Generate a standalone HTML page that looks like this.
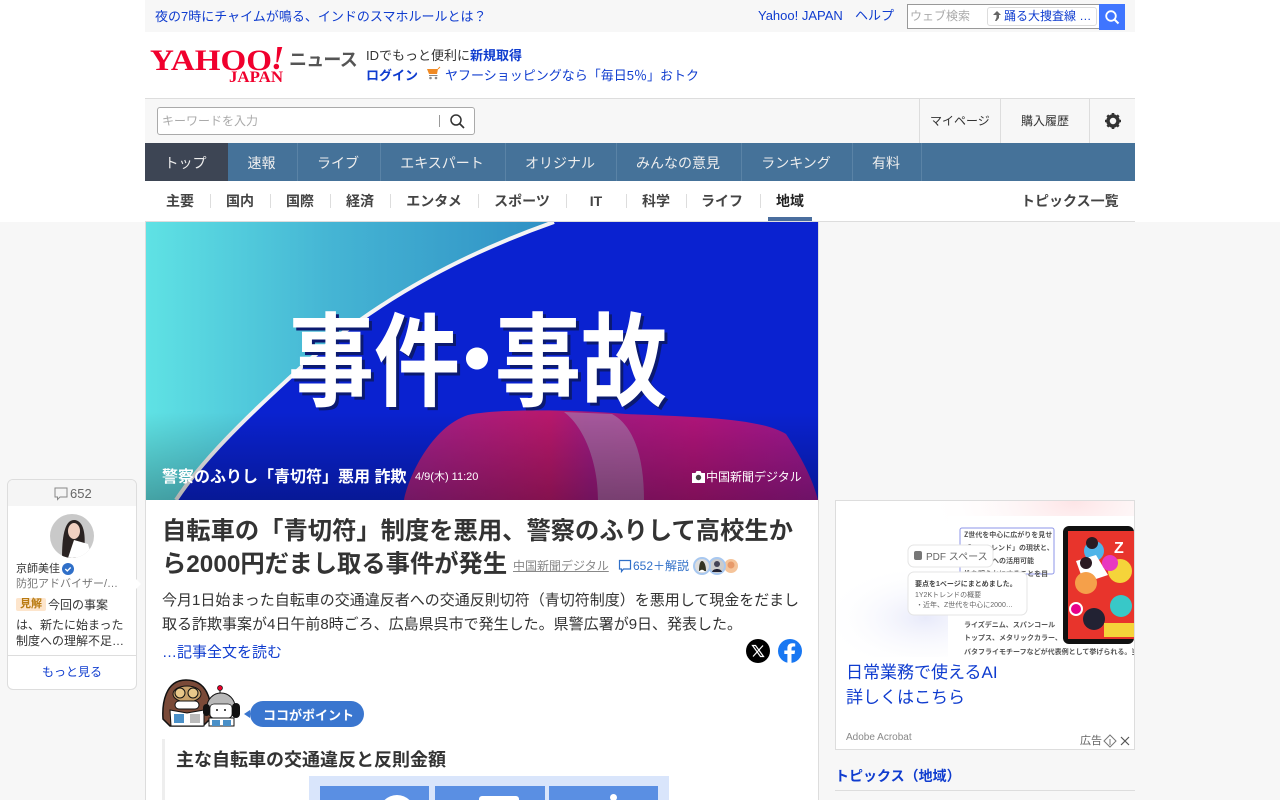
<!DOCTYPE html>
<html lang="ja"><head><meta charset="utf-8"><title>Yahoo!ニュース</title>
<style>
html,body{margin:0;padding:0}
body{width:1280px;height:800px;overflow:hidden;position:relative;background:#f7f7f7;font-family:"Liberation Sans","Noto Sans CJK JP",sans-serif;color:#333}
.a{position:absolute}
.t{position:absolute;white-space:nowrap;line-height:1}
.l{color:#0f3ccf}
.b{font-weight:bold}
.s{position:absolute;background:#ddd;width:1px}
.n{position:absolute;top:143px;height:38px;line-height:40px;font-size:14px;color:#eee;text-align:center;border-right:1px solid #5a83a6;box-sizing:border-box;white-space:nowrap;text-indent:-2px}
.m{position:absolute;top:193px;font-size:14px;font-weight:bold;color:#444;line-height:16px;transform:translateX(-50%);white-space:nowrap}
</style></head><body>
<div class="a" style="left:0;top:0;width:1280px;height:222px;background:#fff"></div>
<div class="a" style="left:145px;top:0;width:990px;height:32px;background:#f7f7f7"></div>
<div class="t l" style="left:155px;top:10px;font-size:13px">夜の7時にチャイムが鳴る、インドのスマホルールとは？</div>
<div class="t l" style="left:758px;top:9px;font-size:13px">Yahoo! JAPAN</div>
<div class="t l" style="left:855px;top:9px;font-size:13px">ヘルプ</div>
<div class="a" style="left:907px;top:4px;width:191px;height:23px;border:1px solid #999;background:#fff"></div>
<div class="t" style="left:910px;top:10px;font-size:12px;color:#aaa">ウェブ検索</div>
<div class="a" style="left:987px;top:7px;width:108px;height:17px;border:1px solid #ddd;border-radius:3px"></div>
<svg class="a" style="left:992px;top:10px" width="10" height="12" viewBox="0 0 10 12"><path d="M5 1l4 4H7v3L4.500 11H3l1.500-3.500V5H1z" fill="#666"/></svg>
<div class="t l" style="left:1004px;top:10px;font-size:12px">踊る大捜査線 …</div>
<div class="a" style="left:1099px;top:4px;width:26px;height:26px;background:#3f75ff"></div>
<svg class="a" style="left:1104px;top:9px" width="16" height="16" viewBox="0 0 16 16"><circle cx="7" cy="7" r="4.800" fill="none" stroke="#fff" stroke-width="1.800"/><path d="M10.500 10.500L14.500 14.500" stroke="#fff" stroke-width="2"/></svg>

<svg class="a" style="left:149px;top:44px" width="140" height="42" viewBox="0 0 140 42">
<g transform="translate(1,26) scale(1,1.25)"><text x="0" y="0" font-family="Liberation Serif" font-weight="bold" font-size="24" fill="#f0002d" textLength="122" lengthAdjust="spacingAndGlyphs">YAHOO</text></g>
<text x="122" y="25" font-family="Liberation Serif" font-weight="bold" font-style="italic" font-size="34" fill="#f0002d">!</text>
<text x="80" y="38" font-family="Liberation Serif" font-weight="bold" font-size="16" fill="#f0002d" textLength="54" lengthAdjust="spacingAndGlyphs">JAPAN</text>
</svg>
<div class="t b" style="left:289px;top:51px;font-size:18px;color:#555;letter-spacing:-.8px">ニュース</div>
<div class="t" style="left:366px;top:49px;font-size:13px">IDでもっと便利に<span class="l b">新規取得</span></div>
<div class="t l b" style="left:366px;top:69px;font-size:13px">ログイン</div>
<svg class="a" style="left:426px;top:65px" width="17" height="16" viewBox="0 0 17 16"><path d="M1 4h11l-1 5H3z" fill="#f08a24"/><path d="M3 10.500h8.500" stroke="#888" stroke-width="1"/><circle cx="4.500" cy="13" r="1.300" fill="#888"/><circle cx="10" cy="13" r="1.300" fill="#888"/><path d="M12 4l2-2" stroke="#f08a24"/></svg>
<div class="t l" style="left:445px;top:69px;font-size:13px">ヤフーショッピングなら「毎日5％」おトク</div>

<div class="a" style="left:145px;top:98px;width:990px;height:45px;background:#f7f7f7;border-top:1px solid #ddd;box-sizing:border-box"></div>
<div class="a" style="left:157px;top:107px;width:316px;height:26px;background:#fff;border:1px solid #aaa;border-radius:3px"></div>
<div class="t" style="left:162px;top:115px;font-size:12px;color:#aaa">キーワードを入力</div>
<div class="a" style="left:439px;top:115px;width:1px;height:12px;background:#999"></div>
<svg class="a" style="left:449px;top:113px" width="16" height="16" viewBox="0 0 16 16"><circle cx="7" cy="7" r="5" fill="none" stroke="#333" stroke-width="1.500"/><path d="M10.500 10.500L15 15" stroke="#333" stroke-width="1.700"/></svg>
<div class="s" style="left:919px;top:99px;height:44px"></div>
<div class="s" style="left:1000px;top:99px;height:44px"></div>
<div class="s" style="left:1089px;top:99px;height:44px"></div>
<div class="t" style="left:930px;top:115px;font-size:12px">マイページ</div>
<div class="t" style="left:1021px;top:115px;font-size:12px">購入履歴</div>
<svg class="a" style="left:1104px;top:112px" width="18" height="18" viewBox="0 0 18 18"><circle cx="9" cy="9" r="5" fill="none" stroke="#333" stroke-width="3.500"/><path d="M9 1v16M1 9h16M3.300 3.300l11.400 11.400M14.700 3.300L3.300 14.700" stroke="#333" stroke-width="2.600" stroke-dasharray="3 10"/></svg>

<div class="a" style="left:145px;top:143px;width:990px;height:38px;background:#457299"></div>
<div class="n" style="left:145px;width:83px;background:#3d4554;border:0">トップ</div>
<div class="n" style="left:228px;width:70px">速報</div>
<div class="n" style="left:298px;width:83px">ライブ</div>
<div class="n" style="left:381px;width:125px">エキスパート</div>
<div class="n" style="left:506px;width:111px">オリジナル</div>
<div class="n" style="left:617px;width:125px">みんなの意見</div>
<div class="n" style="left:742px;width:111px">ランキング</div>
<div class="n" style="left:853px;width:69px">有料</div>

<div class="a" style="left:145px;top:221px;width:990px;height:1px;background:#ddd"></div>
<div class="m" style="left:180px">主要</div><div class="m" style="left:240px">国内</div><div class="m" style="left:300px">国際</div><div class="m" style="left:360px">経済</div><div class="m" style="left:434px">エンタメ</div><div class="m" style="left:522px">スポーツ</div><div class="m" style="left:596px">IT</div><div class="m" style="left:656px">科学</div><div class="m" style="left:722px">ライフ</div><div class="m" style="left:790px;color:#222">地域</div>
<div class="s" style="left:210px;top:194px;height:14px"></div><div class="s" style="left:270px;top:194px;height:14px"></div><div class="s" style="left:330px;top:194px;height:14px"></div><div class="s" style="left:390px;top:194px;height:14px"></div><div class="s" style="left:478px;top:194px;height:14px"></div><div class="s" style="left:566px;top:194px;height:14px"></div><div class="s" style="left:626px;top:194px;height:14px"></div><div class="s" style="left:686px;top:194px;height:14px"></div><div class="s" style="left:760px;top:194px;height:14px"></div>
<div class="a" style="left:768px;top:217px;width:44px;height:4px;background:#4a6e9e"></div>
<div class="t b" style="left:1021px;top:194px;font-size:14px;color:#444">トピックス一覧</div>

<div class="a" style="left:145px;top:222px;width:674px;height:578px;background:#fff;border-left:1px solid #ddd;border-right:1px solid #ddd;box-sizing:border-box"></div>
<svg class="a" style="left:146px;top:222px" width="672" height="278" viewBox="0 0 672 278">
<defs>
<linearGradient id="g1" x1="0" x2="1" y1="0" y2="0"><stop offset="0" stop-color="#5fe2e4"/><stop offset=".45" stop-color="#45b5d4"/><stop offset="1" stop-color="#2f8fc4"/></linearGradient>
<linearGradient id="g2" x1="0" x2="0" y1="0" y2="1"><stop offset="0" stop-color="#000" stop-opacity="0"/><stop offset="1" stop-color="#000" stop-opacity=".28"/></linearGradient>
<linearGradient id="g3" x1="0" x2="1" y1="0" y2="0"><stop offset="0" stop-color="#a0208a"/><stop offset=".35" stop-color="#b8186c"/><stop offset=".45" stop-color="#9e1a80"/><stop offset=".7" stop-color="#b0147a"/><stop offset="1" stop-color="#981890"/></linearGradient>
</defs>
<rect width="672" height="278" fill="#0a22d0"/>
<path d="M0 0H408C300 38 215 90 150 150 95 200 55 240 30 278H0Z" fill="url(#g1)"/>
<path d="M408 0C300 38 215 90 150 150 95 200 55 240 30 278" fill="none" stroke="#f4f4f4" stroke-width="4"/>
<path d="M258 278C262 256 285 205 322 193 350 187 420 187 480 192 560 195 615 197 640 212 655 235 666 255 672 278Z" fill="url(#g3)"/>
<path d="M418 190C438 205 452 240 452 278H498C498 240 490 205 466 192Z" fill="#a868a4" opacity=".8"/>
<g font-family="Liberation Sans,Noto Sans CJK JP,sans-serif" font-weight="bold" font-size="86">
<g transform="translate(145,179) scale(1,1.18)" fill="#0b1a70"><text textLength="172" lengthAdjust="spacingAndGlyphs">事件</text></g>
<g transform="translate(352,179) scale(1,1.18)" fill="#0b1a70"><text textLength="172" lengthAdjust="spacingAndGlyphs">事故</text></g>
<g transform="translate(142,176) scale(1,1.18)" fill="#fff"><text textLength="172" lengthAdjust="spacingAndGlyphs">事件</text></g>
<g transform="translate(349,176) scale(1,1.18)" fill="#fff"><text textLength="172" lengthAdjust="spacingAndGlyphs">事故</text></g>
<text x="331" y="169" text-anchor="middle" fill="#fff">・</text>
</g>
<rect y="190" width="672" height="88" fill="url(#g2)"/>
</svg>
<div class="t b" style="left:162px;top:470px;font-size:16px;color:#fff">警察のふりし「青切符」悪用 詐欺</div>
<div class="t" style="left:415px;top:472px;font-size:11px;color:#fff">4/9(木) 11:20</div>
<svg class="a" style="left:692px;top:471px" width="13" height="12" viewBox="0 0 13 12"><path d="M0 2h3.500l1-2h4l1 2H13v10H0z" fill="#fff"/><circle cx="6.500" cy="6.500" r="2.700" fill="#444"/></svg>
<div class="t" style="left:706px;top:471px;font-size:12px;color:#fff">中国新聞デジタル</div>

<div class="t b" style="left:162px;top:515px;width:640px;font-size:24.300px;line-height:33px;color:#333;white-space:normal">自転車の「青切符」制度を悪用、警察のふりして高校生から2000円だまし取る事件が発生</div>
<div class="t" style="left:513px;top:560px;font-size:12px;color:#888;text-decoration:underline">中国新聞デジタル</div>
<svg class="a" style="left:618px;top:559px" width="14" height="14" viewBox="0 0 14 14"><path d="M1.500 1.500h11v8.500h-7L3.500 12.500V10h-2z" fill="none" stroke="#2f6fc8" stroke-width="1.200"/></svg>
<div class="t" style="left:633px;top:560px;font-size:12px;color:#2f6fc8">652＋解説</div>
<svg class="a" style="left:692px;top:556px" width="48" height="20" viewBox="0 0 48 20"><circle cx="39" cy="10" r="7" fill="#f5c49a"/><circle cx="39" cy="9" r="3.500" fill="#e89a6a"/><circle cx="25" cy="10" r="8" fill="#ccc" stroke="#a8c8f0" stroke-width="2"/><path d="M20 16c1-4 9-4 10 0z" fill="#223"/><circle cx="25" cy="8" r="3" fill="#445"/><circle cx="10" cy="10" r="8" fill="#ddd" stroke="#a8c8f0" stroke-width="2"/><path d="M7 15c0-6 1-10 3-10s4 4 4 10z" fill="#332"/><path d="M7 16c1-3 5-3 6 0z" fill="#fff"/></svg>
<div class="t" style="left:162px;top:589px;width:645px;font-size:15px;line-height:24px;white-space:normal;color:#333">今月1日始まった自転車の交通違反者への交通反則切符（青切符制度）を悪用して現金をだまし取る詐欺事案が4日午前8時ごろ、広島県呉市で発生した。県警広署が9日、発表した。</div>
<div class="t l" style="left:162px;top:645px;font-size:15px">…記事全文を読む</div>
<svg class="a" style="left:746px;top:639px" width="24" height="24" viewBox="0 0 24 24"><circle cx="12" cy="12" r="12" fill="#000"/><path d="M6.500 6.500h3l8 11h-3zM17 6.500l-10 11" fill="none" stroke="#fff" stroke-width="1.200"/></svg>
<svg class="a" style="left:778px;top:639px" width="24" height="24" viewBox="0 0 24 24"><circle cx="12" cy="12" r="12" fill="#1877f2"/><path d="M13.500 24V15h3l.6-3.500h-3.600V9.400c0-1 .5-1.900 2-1.900h1.700V4.500s-1.500-.3-3-.3c-3 0-4.800 1.800-4.800 5v2.300H6.300V15h3.100v9z" fill="#fff"/></svg>

<svg class="a" style="left:162px;top:679px" width="80" height="48" viewBox="0 0 80 48">
<path d="M1 40C0 25 3 1 24 1s26 20 25 38l-8 8H8z" fill="#7a4a38" stroke="#111" stroke-width="1.500"/>
<ellipse cx="25" cy="15" rx="14" ry="8" fill="#c9a26a" stroke="#111"/><circle cx="18" cy="14" r="5" fill="#e8c88a" stroke="#111"/><circle cx="31" cy="14" r="5" fill="#e8c88a" stroke="#111"/>
<rect x="13" y="22" width="24" height="8" rx="4" fill="#fff" stroke="#111"/>
<path d="M8 31l17 3 17-3v16H9z" fill="#fff" stroke="#111"/><rect x="12" y="35" width="10" height="9" fill="#4a90c8"/><rect x="28" y="35" width="10" height="9" fill="#bbb"/>
<circle cx="58" cy="9" r="2.500" fill="#e8002a" stroke="#111" stroke-width=".7"/><path d="M58 11v3" stroke="#111"/>
<circle cx="59" cy="28" r="14" fill="#b8b8b8" stroke="#111"/><rect x="48" y="25" width="22" height="14" rx="4" fill="#fff" stroke="#111" stroke-width=".7"/><circle cx="55" cy="31" r="1" fill="#111"/><circle cx="63" cy="31" r="1" fill="#111"/>
<rect x="70" y="24" width="8" height="15" rx="4" fill="#111"/><rect x="41" y="25" width="7" height="12" rx="3.500" fill="#111"/>
<path d="M47 39h25v8H47z" fill="#fff" stroke="#111"/><rect x="50" y="41" width="8" height="6" fill="#4a90c8"/><rect x="61" y="41" width="8" height="6" fill="#4a90c8"/>
</svg>
<div class="a" style="left:250px;top:701px;width:114px;height:26px;background:#3a76cf;border-radius:13px"></div>
<div class="a" style="left:244px;top:710px;border:4px solid transparent;border-right:6px solid #3a76cf;border-left:0"></div>
<div class="t b" style="left:263px;top:709px;font-size:13px;color:#fff">ココがポイント</div>

<div class="a" style="left:162px;top:739px;width:3px;height:61px;background:#eee"></div>
<div class="t b" style="left:176px;top:751px;font-size:18px;color:#333">主な自転車の交通違反と反則金額</div>
<div class="a" style="left:309px;top:776px;width:360px;height:24px;background:#d9e5fb;overflow:hidden">
<div class="a" style="left:11px;top:10px;width:109px;height:14px;background:#5a8fe3"></div>
<div class="a" style="left:126px;top:10px;width:110px;height:14px;background:#5a8fe3"></div>
<div class="a" style="left:240px;top:10px;width:109px;height:14px;background:#5a8fe3"></div>
<div class="a" style="left:70px;top:19px;width:36px;height:36px;border-radius:50%;background:#fff"></div>
<div class="a" style="left:170px;top:20px;width:40px;height:10px;border-radius:3px;background:#fff"></div>
<div class="a" style="left:301px;top:18px;width:7px;height:7px;border-radius:50%;background:#fff"></div>
</div>

<div class="a" style="left:835px;top:500px;width:300px;height:250px;background:#fff;border:1px solid #ddd;box-sizing:border-box;overflow:hidden">
<svg class="a" style="left:0;top:0" width="298" height="156" viewBox="0 0 298 156">
<defs>
<radialGradient id="h1" cx=".3" cy=".75" r=".35"><stop offset="0" stop-color="#e8eafa"/><stop offset="1" stop-color="#fff" stop-opacity="0"/></radialGradient>
<radialGradient id="h2" cx=".8" cy="0" r=".5"><stop offset="0" stop-color="#fde4e6"/><stop offset="1" stop-color="#fff" stop-opacity="0"/></radialGradient>
</defs>
<rect width="298" height="156" fill="#fff"/>
<rect width="298" height="156" fill="url(#h1)"/>
<rect width="298" height="156" fill="url(#h2)"/>
<rect x="112" y="15" width="186" height="141" fill="#fff"/>
<rect x="124" y="27" width="94" height="46" rx="2" fill="none" stroke="#8e96e8" stroke-width="1"/>
<g fill="#555" font-size="7" font-weight="bold" font-family="Noto Sans CJK JP,sans-serif">
<text x="128" y="36">Z世代を中心に広がりを見せ</text>
<text x="128" y="49">「Y2Kトレンド」の現状と、</text>
<text x="128" y="62">ビジネスへの活用可能</text>
<text x="128" y="75">性を明らかにすることを目</text>
<text x="128" y="126">ライズデニム、スパンコール</text>
<text x="128" y="139">トップス、メタリックカラー、</text>
<text x="128" y="153">バタフライモチーフなどが代表例として挙げられる。当時</text>
</g>
<rect x="227" y="25" width="71" height="118" rx="6" fill="#111"/>
<rect x="232" y="30" width="66" height="108" fill="#e8342c"/>
<circle cx="258" cy="50" r="10" fill="#4fb4e8"/><path d="M240 60l20-6 12 20-24 8z" fill="#fff"/><circle cx="284" cy="70" r="12" fill="#f5d43a"/><circle cx="250" cy="82" r="11" fill="#f5a04a"/><circle cx="285" cy="105" r="11" fill="#38c8c8"/><circle cx="258" cy="118" r="11" fill="#223"/><circle cx="274" cy="62" r="8" fill="#e838c0"/><circle cx="250" cy="62" r="6" fill="#2a1a22"/><circle cx="256" cy="42" r="6" fill="#2a1a22"/>
<circle cx="240" cy="108" r="6" fill="#e8008a" stroke="#fff" stroke-width="2"/>
<rect x="268" y="122" width="30" height="14" fill="#f5d43a"/>
<text x="278" y="52" font-size="16" font-weight="bold" fill="#fff" font-family="Liberation Sans">Z</text>
<rect x="72" y="44" width="85" height="22" rx="6" fill="#fff" stroke="#e4e4e4"/>
<text x="90" y="59" font-size="10" fill="#666" font-family="Liberation Sans,Noto Sans CJK JP,sans-serif">PDF スペース</text>
<rect x="78" y="50" width="8" height="9" rx="2" fill="#777"/>
<rect x="72" y="71" width="119" height="43" rx="6" fill="#fff" stroke="#e4e4e4"/>
<g font-size="7" font-family="Liberation Sans,Noto Sans CJK JP,sans-serif" fill="#666">
<text x="79" y="85" font-weight="bold" fill="#444">要点を1ページにまとめました。</text>
<text x="79" y="96">1Y2Kトレンドの概要</text>
<text x="80" y="106">・近年、Z世代を中心に2000…</text>
</g>
</svg>
<div class="t l" style="left:10px;top:163px;font-size:17px">日常業務で使えるAI</div>
<div class="t l" style="left:10px;top:188px;font-size:17px">詳しくはこちら</div>
<div class="t" style="left:10px;top:232px;font-size:10px;color:#888">Adobe Acrobat</div>
<div class="t" style="left:244px;top:235px;font-size:11px;color:#666">広告</div>
<svg class="a" style="left:267px;top:233px" width="14" height="14" viewBox="0 0 14 14"><path d="M7 1l6 6-6 6-6-6z" fill="none" stroke="#777"/><path d="M7 5v6" stroke="#777"/></svg>
<svg class="a" style="left:283px;top:234px" width="12" height="12" viewBox="0 0 12 12"><path d="M2 2l8 8M10 2l-8 8" stroke="#555" stroke-width="1.200"/></svg>
</div>
<div class="t b l" style="left:835px;top:769px;font-size:14px">トピックス（地域）</div>
<div class="a" style="left:835px;top:790px;width:300px;height:1px;background:#ddd"></div>

<div class="a" style="left:7px;top:479px;width:130px;height:211px;background:#fff;border:1px solid #ddd;border-radius:6px;box-sizing:border-box"></div>
<div class="a" style="left:8px;top:480px;width:128px;height:26px;background:#f5f5f5;border-radius:5px 5px 0 0"></div>
<svg class="a" style="left:54px;top:487px" width="14" height="14" viewBox="0 0 14 14"><path d="M1 1h12v9H6l-2.500 2.500V10H1z" fill="none" stroke="#888"/></svg>
<div class="t" style="left:70px;top:487px;font-size:13px;color:#666">652</div>
<svg class="a" style="left:50px;top:514px" width="44" height="44" viewBox="0 0 44 44"><clipPath id="c"><circle cx="22" cy="22" r="22"/></clipPath><g clip-path="url(#c)"><rect width="44" height="44" fill="#c9c9c9"/><path d="M12 44C12 25 14 6 24 6s12 16 10 30l-8 8z" fill="#2a2322"/><ellipse cx="24" cy="17" rx="6" ry="8" fill="#f0d0c0"/><path d="M18 44l6-18 14 4 4 14z" fill="#fff"/></g></svg>
<div class="t" style="left:16px;top:564px;font-size:11px;color:#333">京師美佳</div>
<svg class="a" style="left:62px;top:563px" width="12" height="12" viewBox="0 0 12 12"><circle cx="6" cy="6" r="6" fill="#2f6fc8"/><path d="M3.300 6l2 2 3.400-3.500" fill="none" stroke="#fff" stroke-width="1.300"/></svg>
<div class="t" style="left:16px;top:579px;font-size:11px;color:#777">防犯アドバイザー/…</div>
<div class="a" style="left:16px;top:598px;width:30px;height:13px;background:#fde5cc;border-radius:2px"></div>
<div class="t b" style="left:20px;top:599px;font-size:11px;color:#b87a10">見解</div>
<div class="t" style="left:48px;top:599px;font-size:12px">今回の事案</div>
<div class="t" style="left:16px;top:619px;font-size:12px">は、新たに始まった</div>
<div class="t" style="left:16px;top:635px;font-size:12px">制度への理解不足…</div>
<div class="a" style="left:8px;top:655px;width:128px;height:1px;background:#ddd"></div>
<div class="t l" style="left:42px;top:666px;font-size:12px">もっと見る</div>
<div class="a" style="left:136px;top:579px;border:5px solid transparent;border-left:5px solid #fff;border-right:0"></div>
</body></html>
